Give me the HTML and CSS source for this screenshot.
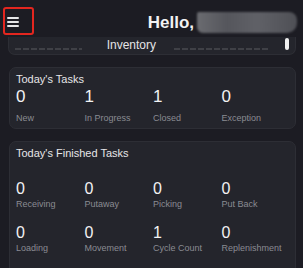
FILE: index.html
```html
<!DOCTYPE html>
<html lang="en">
<head>
    <meta charset="UTF-8">
    <meta name="viewport" content="width=device-width, initial-scale=1.0">
    <title>Dashboard</title>
    <link rel="stylesheet" href="styles.css">
</head>
<body>
    <header>
        <button class="menu-btn" aria-label="Menu">
            <span></span>
            <span></span>
            <span></span>
        </button>
        <div class="greeting">
            Hello,
            <span class="user-name"></span>
        </div>
    </header>

    <main>
        <!-- inventory summary, scrolled mostly out of view -->
        <div class="card inventory-card">
            <div class="inventory-row">
                <span class="hidden-line"></span>
                <span class="inventory-title">Inventory</span>
                <span class="hidden-line wide"></span>
                <span class="scroll-thumb"></span>
            </div>
        </div>

        <section class="card">
            <h2>Today's Tasks</h2>
            <div class="stat-grid">
                <div class="stat"><div class="stat-value">0</div><div class="stat-label">New</div></div>
                <div class="stat"><div class="stat-value">1</div><div class="stat-label">In Progress</div></div>
                <div class="stat"><div class="stat-value">1</div><div class="stat-label">Closed</div></div>
                <div class="stat"><div class="stat-value">0</div><div class="stat-label">Exception</div></div>
            </div>
        </section>

        <section class="card finished-card">
            <h2>Today's Finished Tasks</h2>
            <div class="stat-grid">
                <div class="stat"><div class="stat-value">0</div><div class="stat-label">Receiving</div></div>
                <div class="stat"><div class="stat-value">0</div><div class="stat-label">Putaway</div></div>
                <div class="stat"><div class="stat-value">0</div><div class="stat-label">Picking</div></div>
                <div class="stat"><div class="stat-value">0</div><div class="stat-label">Put Back</div></div>
                <div class="stat"><div class="stat-value">0</div><div class="stat-label">Loading</div></div>
                <div class="stat"><div class="stat-value">0</div><div class="stat-label">Movement</div></div>
                <div class="stat"><div class="stat-value">1</div><div class="stat-label">Cycle Count</div></div>
                <div class="stat"><div class="stat-value">0</div><div class="stat-label">Replenishment</div></div>
            </div>
        </section>
    </main>
</body>
</html>
```

FILE: styles.css
```css
:root {
    --bg-color: #1c1c23;
    --card-color: #24252c;
    --card-border: #2d2e35;
    --text-color: #f2f2f3;
    --muted-color: #8a8b92;
    --mark-color: #e3261f;
}

* {
    margin: 0;
    padding: 0;
    box-sizing: border-box;
}

body {
    font-family: 'Liberation Sans', Arial, sans-serif;
    background-color: var(--bg-color);
    color: var(--text-color);
    height: 268px;
    overflow: hidden;
}

header {
    height: 37px;
    display: flex;
    align-items: flex-start;
    justify-content: space-between;
    padding: 7px 6px 0 3px;
}

.menu-btn {
    width: 31px;
    height: 28px;
    border: 2px solid var(--mark-color);
    border-radius: 3px;
    background: none;
    display: flex;
    flex-direction: column;
    justify-content: center;
    gap: 2.5px;
    padding: 2px 0 0 2px;
}

.menu-btn span {
    display: block;
    width: 12px;
    height: 1.5px;
    background-color: #e6e6e8;
    border-radius: 1px;
}

.greeting {
    display: flex;
    align-items: center;
    gap: 3px;
    font-size: 17px;
    font-weight: bold;
    margin-top: 5px;
}

.user-name {
    display: block;
    width: 100px;
    height: 21px;
    background: linear-gradient(90deg, #6a6b70, #55565c 30%, #606167 60%, #4f5056);
    border-radius: 2px 8px 10px 6px;
    filter: blur(1px);
}

main {
    padding: 0 7px 0 9px;
    display: flex;
    flex-direction: column;
    gap: 12px;
}

.card {
    background-color: var(--card-color);
    border: 1px solid var(--card-border);
    border-radius: 7px;
    padding: 5px 5px 4px 6px;
}

.inventory-card {
    margin-left: -1px;
    height: 18px;
    border-top: none;
    border-radius: 0 0 7px 7px;
    padding: 0 6px;
}

.inventory-row {
    display: flex;
    align-items: flex-start;
    font-size: 12px;
    line-height: 14px;
}

.inventory-title {
    margin: 1px 0 0 25px;
    color: #e4e4e6;
}

.hidden-line {
    margin-top: 11px;
    width: 68px;
    height: 2px;
    background: repeating-linear-gradient(90deg, #3f4046 0 6px, transparent 6px 8px);
    filter: blur(0.6px);
}

.hidden-line.wide {
    width: 96px;
    margin-left: 18px;
}

.scroll-thumb {
    width: 4px;
    height: 12px;
    margin: 1px 0 0 17px;
    border-radius: 2px;
    background-color: #f0f0f0;
}

h2 {
    font-size: 11px;
    font-weight: normal;
    line-height: 13px;
    color: #e6e6e8;
}

.stat-grid {
    display: grid;
    grid-template-columns: repeat(4, 1fr);
    padding-top: 1px;
}

.stat-value {
    font-size: 17px;
    line-height: 20px;
}

.stat-label {
    margin-top: 6px;
    font-size: 9px;
    line-height: 11px;
    color: var(--muted-color);
}

.finished-card {
    padding-bottom: 20px;
}

.finished-card .stat-grid {
    padding-top: 19px;
    row-gap: 13px;
}

.finished-card .stat-value {
    font-size: 16px;
    line-height: 19px;
}

.finished-card .stat-label {
    margin-top: 1px;
}
```
